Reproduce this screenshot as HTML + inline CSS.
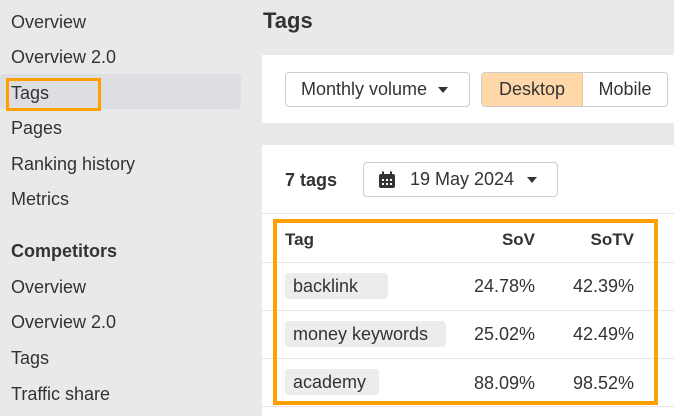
<!DOCTYPE html>
<html><head><style>
*{margin:0;padding:0;box-sizing:border-box}
body{width:674px;height:416px;overflow:hidden;background:#e8e9eb;font-family:"Liberation Sans",Arial,sans-serif;color:#333;position:relative}
.a{position:absolute}
.nav{left:11px;font-size:18px;color:#333;line-height:20px}
.panel{background:#fff}
.btn{border:1px solid #ccc;border-radius:4px;background:#fff;font-size:18px;display:flex;align-items:center}
.tri{width:0;height:0;border-left:5px solid transparent;border-right:5px solid transparent;border-top:6px solid #333;display:inline-block}
.hl{height:1px;background:#e5e5e5}
.chip{background:#ececec;border-radius:4px;font-size:18px;padding:0 8px;height:26px;line-height:26px}
.num{font-size:18px;text-align:right}
.th{font-size:17px;font-weight:bold}
</style></head><body>
<div class="a" style="left:0;top:74px;width:241px;height:35px;background:#dcdee1;border-radius:4px"></div>
<div class="a" style="left:6px;top:78px;width:95px;height:33px;border:3px solid #ff9f00"></div>
<div class="a nav" style="top:12px">Overview</div>
<div class="a nav" style="top:47px">Overview 2.0</div>
<div class="a nav" style="top:83px">Tags</div>
<div class="a nav" style="top:118px">Pages</div>
<div class="a nav" style="top:154px">Ranking history</div>
<div class="a nav" style="top:189px">Metrics</div>
<div class="a nav" style="top:241px;font-weight:bold">Competitors</div>
<div class="a nav" style="top:277px">Overview</div>
<div class="a nav" style="top:312px">Overview 2.0</div>
<div class="a nav" style="top:348px">Tags</div>
<div class="a nav" style="top:384px">Traffic share</div>

<div class="a" style="left:263px;top:8px;font-size:22px;font-weight:bold;color:#333">Tags</div>
<div class="a panel" style="left:262px;top:55px;width:412px;height:68px"></div>
<div class="a btn" style="left:285px;top:72px;width:185px;height:35px;padding-left:15px">Monthly volume<span class="tri" style="margin-left:11px"></span></div>
<div class="a" style="left:481px;top:72px;width:187px;height:35px;border:1px solid #ccc;border-radius:4px;overflow:hidden;display:flex;font-size:18px">
<div style="width:101px;background:#fed8a9;border-right:1px solid #f0c48e;display:flex;align-items:center;justify-content:center">Desktop</div>
<div style="flex:1;display:flex;align-items:center;justify-content:center;background:#fff">Mobile</div></div>

<div class="a panel" style="left:262px;top:145px;width:412px;height:271px"></div>
<div class="a" style="left:285px;top:170px;font-size:18px;font-weight:bold">7 tags</div>
<div class="a btn" style="left:363px;top:162px;width:195px;height:35px;padding-left:14px">
<svg width="18" height="18" viewBox="0 0 18 18"><rect x="1" y="3" width="16" height="14" rx="2" fill="#333"/><rect x="4" y="0.5" width="2" height="4" fill="#333"/><rect x="12" y="0.5" width="2" height="4" fill="#333"/><g fill="#fff"><rect x="4" y="8" width="2" height="2"/><rect x="8" y="8" width="2" height="2"/><rect x="12" y="8" width="2" height="2"/><rect x="4" y="12" width="2" height="2"/><rect x="8" y="12" width="2" height="2"/><rect x="12" y="12" width="2" height="2"/></g></svg>
<span style="margin-left:14px">19 May 2024</span><span class="tri" style="margin-left:13px"></span></div>
<div class="a hl" style="left:262px;top:213px;width:412px"></div>
<div class="a hl" style="left:262px;top:262px;width:412px"></div>
<div class="a hl" style="left:262px;top:310px;width:412px"></div>
<div class="a hl" style="left:262px;top:358px;width:412px"></div>
<div class="a hl" style="left:262px;top:406px;width:412px"></div>

<div class="a th" style="left:285px;top:230px">Tag</div>
<div class="a th" style="left:460px;top:230px;width:75px;text-align:right">SoV</div>
<div class="a th" style="left:560px;top:230px;width:74px;text-align:right">SoTV</div>

<div class="a chip" style="left:285px;top:273px;width:103px">backlink</div>
<div class="a num" style="left:440px;top:276px;width:95px">24.78%</div>
<div class="a num" style="left:540px;top:276px;width:94px">42.39%</div>
<div class="a chip" style="left:285px;top:321px;width:161px">money keywords</div>
<div class="a num" style="left:440px;top:324px;width:95px">25.02%</div>
<div class="a num" style="left:540px;top:324px;width:94px">42.49%</div>
<div class="a chip" style="left:285px;top:369px;width:94px">academy</div>
<div class="a num" style="left:440px;top:373px;width:95px">88.09%</div>
<div class="a num" style="left:540px;top:373px;width:94px">98.52%</div>

<div class="a" style="left:273px;top:219px;width:385px;height:186px;border:4px solid #ff9f00"></div>
</body></html>
